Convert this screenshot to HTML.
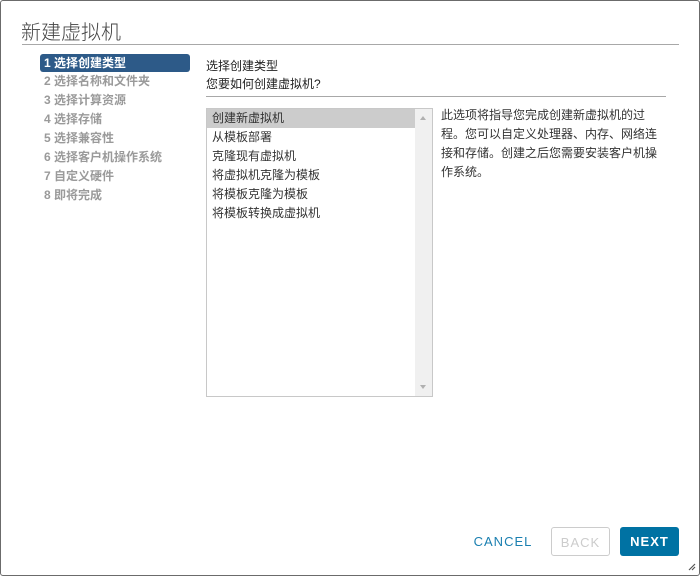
<!DOCTYPE html>
<html><head><meta charset="utf-8"><style>
*{margin:0;padding:0;box-sizing:border-box}
body{width:700px;height:576px;background:#fff;font-family:"Liberation Sans","Noto Sans CJK SC",sans-serif;position:relative;overflow:hidden;color:#333}
.frame{position:absolute;left:0;top:0;width:700px;height:576px;border:1px solid #6b6b6b;border-radius:3px}
.abs{position:absolute;white-space:nowrap}
.title{left:21px;top:16px;font-size:20px;color:#444;font-weight:300}
.hr{position:absolute;height:1px;background:#a8a8a8}
.nav{left:40px;font-size:12px;font-weight:bold;color:#9a9a9a;width:150px;height:18px;line-height:18px;padding-left:4px}
.sel{background:#2d5a88;color:#fff;border-radius:3px}
.list{position:absolute;left:206px;top:108px;width:227px;height:289px;border:1px solid #c8c8c8}
.row{height:19px;line-height:19px;font-size:12px;padding-left:5px;color:#333;width:208px}
.row.on{background:#cccccc}
.sb{position:absolute;right:0;top:0;width:17px;height:100%;background:#f0f0f0}
.desc{left:441px;top:106px;width:226px;font-size:12px;line-height:19px;color:#333;white-space:normal;word-break:break-all}
.btn{position:absolute;top:527px;height:29px;font-size:13px;letter-spacing:1px;text-align:center;line-height:29px;border-radius:3px}
</style></head><body>
<div class="frame"></div>
<div class="abs title">新建虚拟机</div>
<div class="hr" style="left:22px;top:44px;width:657px"></div>
<div class="abs nav sel" style="top:54px">1 选择创建类型</div>
<div class="abs nav" style="top:72px">2 选择名称和文件夹</div>
<div class="abs nav" style="top:91px">3 选择计算资源</div>
<div class="abs nav" style="top:110px">4 选择存储</div>
<div class="abs nav" style="top:129px">5 选择兼容性</div>
<div class="abs nav" style="top:148px">6 选择客户机操作系统</div>
<div class="abs nav" style="top:167px">7 自定义硬件</div>
<div class="abs nav" style="top:186px">8 即将完成</div>
<div class="abs" style="left:206px;top:57px;font-size:12px;color:#222">选择创建类型</div>
<div class="abs" style="left:206px;top:75px;font-size:12px;color:#222">您要如何创建虚拟机?</div>
<div class="hr" style="left:206px;top:96px;width:460px"></div>
<div class="list">
<div class="sb"><div style="position:absolute;left:5px;top:7px;border:3px solid transparent;border-bottom:4px solid #b0b0b0;border-top:0"></div><div style="position:absolute;left:5px;bottom:7px;border:3px solid transparent;border-top:4px solid #b0b0b0;border-bottom:0"></div></div>
<div class="row on">创建新虚拟机</div>
<div class="row">从模板部署</div>
<div class="row">克隆现有虚拟机</div>
<div class="row">将虚拟机克隆为模板</div>
<div class="row">将模板克隆为模板</div>
<div class="row">将模板转换成虚拟机</div>
</div>
<div class="abs desc">此选项将指导您完成创建新虚拟机的过程。您可以自定义处理器、内存、网络连接和存储。创建之后您需要安装客户机操作系统。</div>
<div class="btn" style="left:468px;width:70px;color:#1a7fb0">CANCEL</div>
<div class="btn" style="left:551px;width:59px;border:1px solid #ccc;color:#ccc">BACK</div>
<div class="btn" style="left:620px;width:59px;background:#0072a3;color:#fff;font-weight:bold">NEXT</div>
<svg class="abs" style="left:688px;top:563px" width="8" height="8"><path d="M1 7L7 1M4 7L7 4" stroke="#555" stroke-width="1.2"/></svg>
</body></html>
